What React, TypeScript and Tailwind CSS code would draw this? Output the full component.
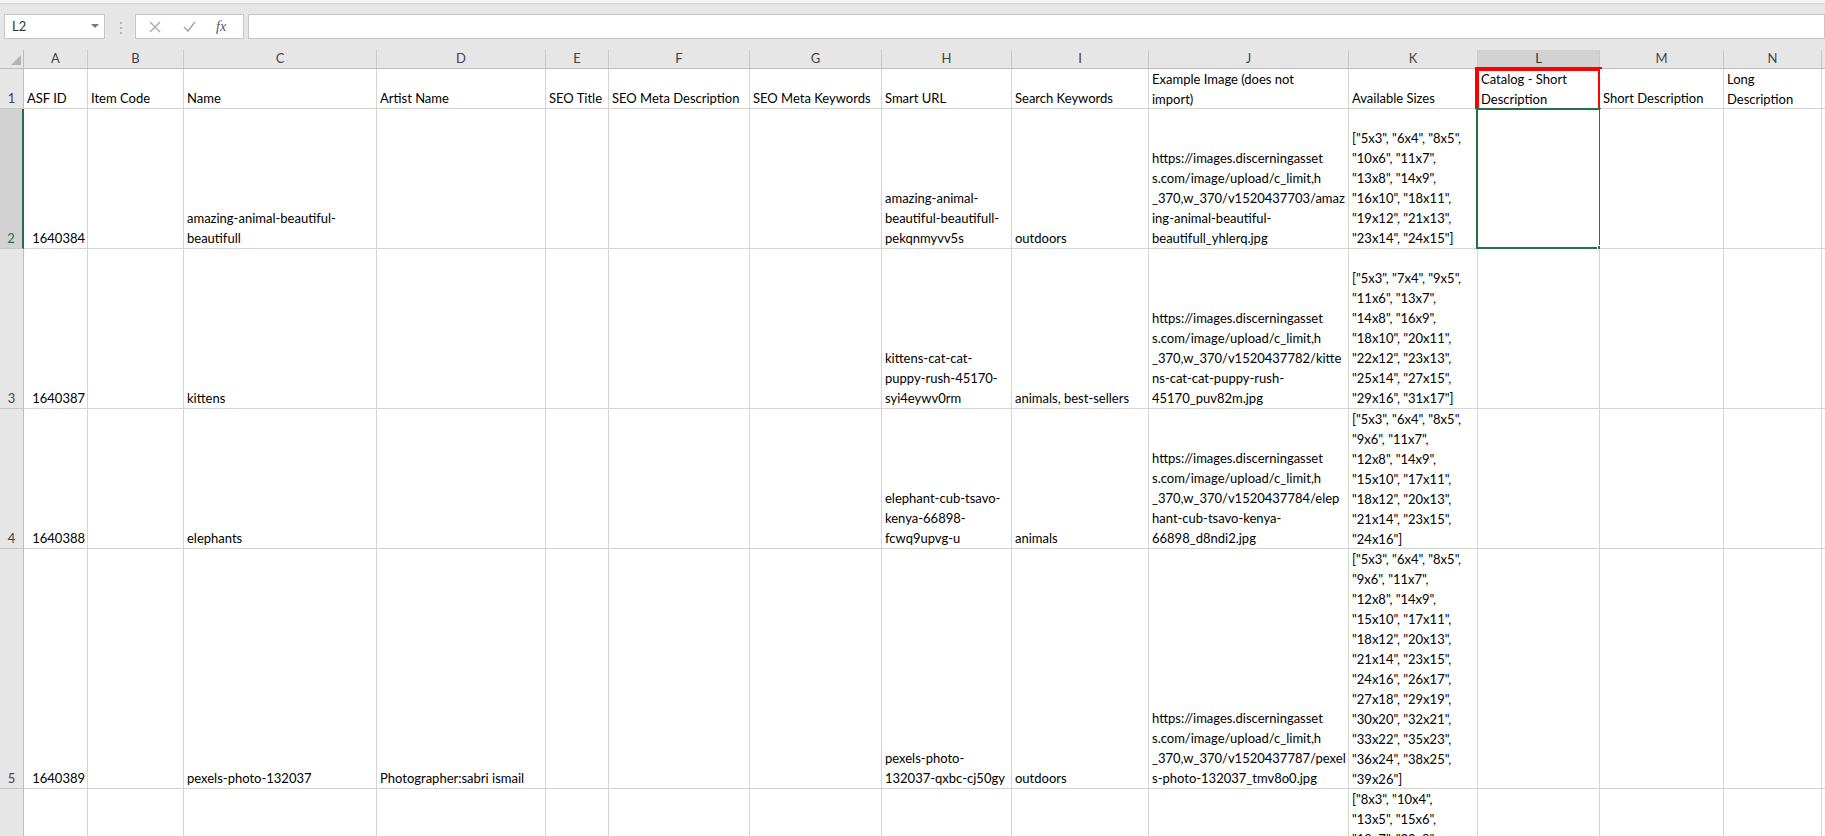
import React from "react";

const COLS = ["A", "B", "C", "D", "E", "F", "G", "H", "I", "J", "K", "L", "M", "N"];

type Row = {
  n: number;
  h: string;
  cells: Partial<Record<string, string[]>>;
};

const url = (id: string, tail: string[]) => [
  "https://images.discerningasset",
  "s.com/image/upload/c_limit,h",
  `_370,w_370/v${id}`,
  ...tail,
];

const header: Row = {
  n: 1,
  h: "h-[40px]",
  cells: {
    A: ["ASF ID"],
    B: ["Item Code"],
    C: ["Name"],
    D: ["Artist Name"],
    E: ["SEO Title"],
    F: ["SEO Meta Description"],
    G: ["SEO Meta Keywords"],
    H: ["Smart URL"],
    I: ["Search Keywords"],
    J: ["Example Image (does not", "import)"],
    K: ["Available Sizes"],
    L: ["Catalog - Short", "Description"],
    M: ["Short Description"],
    N: ["Long", "Description"],
  },
};

const rows: Row[] = [
  {
    n: 2,
    h: "h-[140px]",
    cells: {
      A: ["1640384"],
      C: ["amazing-animal-beautiful-", "beautifull"],
      H: ["amazing-animal-", "beautiful-beautifull-", "pekqnmyvv5s"],
      I: ["outdoors"],
      J: url("1520437703/amaz", ["ing-animal-beautiful-", "beautifull_yhlerq.jpg"]),
      K: [
        '["5x3", "6x4", "8x5",',
        '"10x6", "11x7",',
        '"13x8", "14x9",',
        '"16x10", "18x11",',
        '"19x12", "21x13",',
        '"23x14", "24x15"]',
      ],
    },
  },
  {
    n: 3,
    h: "h-[160px]",
    cells: {
      A: ["1640387"],
      C: ["kittens"],
      H: ["kittens-cat-cat-", "puppy-rush-45170-", "syi4eywv0rm"],
      I: ["animals, best-sellers"],
      J: url("1520437782/kitte", ["ns-cat-cat-puppy-rush-", "45170_puv82m.jpg"]),
      K: [
        '["5x3", "7x4", "9x5",',
        '"11x6", "13x7",',
        '"14x8", "16x9",',
        '"18x10", "20x11",',
        '"22x12", "23x13",',
        '"25x14", "27x15",',
        '"29x16", "31x17"]',
      ],
    },
  },
  {
    n: 4,
    h: "h-[140px]",
    cells: {
      A: ["1640388"],
      C: ["elephants"],
      H: ["elephant-cub-tsavo-", "kenya-66898-", "fcwq9upvg-u"],
      I: ["animals"],
      J: url("1520437784/elep", ["hant-cub-tsavo-kenya-", "66898_d8ndi2.jpg"]),
      K: [
        '["5x3", "6x4", "8x5",',
        '"9x6", "11x7",',
        '"12x8", "14x9",',
        '"15x10", "17x11",',
        '"18x12", "20x13",',
        '"21x14", "23x15",',
        '"24x16"]',
      ],
    },
  },
  {
    n: 5,
    h: "h-[240px]",
    cells: {
      A: ["1640389"],
      C: ["pexels-photo-132037"],
      D: ["Photographer:sabri ismail"],
      H: ["pexels-photo-", "132037-qxbc-cj50gy"],
      I: ["outdoors"],
      J: url("1520437787/pexel", ["s-photo-132037_tmv8o0.jpg"]),
      K: [
        '["5x3", "6x4", "8x5",',
        '"9x6", "11x7",',
        '"12x8", "14x9",',
        '"15x10", "17x11",',
        '"18x12", "20x13",',
        '"21x14", "23x15",',
        '"24x16", "26x17",',
        '"27x18", "29x19",',
        '"30x20", "32x21",',
        '"33x22", "35x23",',
        '"36x24", "38x25",',
        '"39x26"]',
      ],
    },
  },
  {
    // only the top of this row is in view
    n: 6,
    h: "h-[140px]",
    cells: {
      J: url("1520437790/pexel", ["s-photo-247502_b3kq1z.jpg"]),
      K: [
        '["8x3", "10x4",',
        '"13x5", "15x6",',
        '"18x7", "20x8",',
        '"23x9", "25x10",',
        '"28x11", "30x12",',
        '"33x13", "35x14",',
        '"38x15"]',
      ],
    },
  },
];

function Cell({ col, row }: { col: string; row: Row }) {
  const lines = row.cells[col] ?? [];
  const isNum = col === "A" && row.n > 1;
  const selected = col === "L" && row.n === 2;
  const marked = col === "L" && row.n === 1;
  return (
    <div
      className={`relative flex flex-col justify-end border-r border-b border-[#d4d4d4] bg-white leading-[20px] ${
        isNum ? "items-end pr-[2px]" : "items-start pl-[3px]"
      } ${row.h}`}
    >
      <div className="w-full overflow-hidden">
        {lines.map((l, i) => (
          <div key={i} className={`whitespace-pre ${isNum ? "text-right" : ""}`}>
            {l}
          </div>
        ))}
      </div>
      {selected && (
        <div className="absolute -left-[2px] -top-[1px] -right-[2px] -bottom-[1px] border-2 border-[#217346]">
          <div className="absolute -right-[5px] -bottom-[5px] h-[7px] w-[7px] border border-white bg-[#217346]" />
        </div>
      )}
      {marked && (
        <div className="absolute -left-[3px] -top-[2px] -right-[3px] -bottom-[7px] border-4 border-[#ff0000]" />
      )}
    </div>
  );
}

function RowHead({ row }: { row: Row }) {
  const sel = row.n === 2;
  return (
    <div
      className={`flex items-end justify-center border-b border-[#c8c8c8] leading-[20px] ${row.h} ${
        sel
          ? "border-r-2 border-r-[#217346] bg-[#d2d2d2] text-[#217346]"
          : "border-r border-r-[#bdbdbd] bg-[#e6e6e6] text-[#444]"
      }`}
    >
      {row.n < 6 ? row.n : ""}
    </div>
  );
}

export default function App() {
  return (
    <div className="h-[836px] w-[1825px] overflow-hidden bg-white font-['Lato',sans-serif] text-[13px] text-black">
      {/* ribbon edge */}
      <div className="h-[4px] border-b border-[#d5d5d5] bg-[#f3f3f3]" />

      {/* formula bar */}
      <div className="flex h-[46px] items-start bg-[#e6e6e6] pl-[4px] pt-[10px]">
        <div className="flex h-[25px] w-[101px] items-center justify-between border border-[#c6c6c6] bg-white pl-[7px] pr-[5px] text-[#333]">
          <span>L2</span>
          <svg width="8" height="5" viewBox="0 0 8 5">
            <path d="M0 0h8L4 4z" fill="#777" />
          </svg>
        </div>
        <div className="ml-[15px] mt-[8px] flex w-[3px] flex-col gap-[3px]">
          <div className="h-[2px] w-[2px] bg-[#b5b5b5]" />
          <div className="h-[2px] w-[2px] bg-[#b5b5b5]" />
          <div className="h-[2px] w-[2px] bg-[#b5b5b5]" />
        </div>
        <div className="ml-[12px] flex h-[25px] w-[109px] items-center border border-[#c6c6c6] bg-white">
          <svg className="ml-[13px]" width="12" height="12" viewBox="0 0 12 12">
            <path d="M1 1l10 10M11 1L1 11" stroke="#a6a6a6" strokeWidth="1.3" />
          </svg>
          <svg className="ml-[22px]" width="13" height="11" viewBox="0 0 13 11">
            <path d="M1 6l4 4 7-9" stroke="#a6a6a6" strokeWidth="1.5" fill="none" />
          </svg>
          <span className="ml-[20px] font-['Liberation_Serif',serif] text-[14px] italic text-[#555]">fx</span>
        </div>
        <div className="ml-[4px] h-[25px] flex-1 border border-[#c6c6c6] bg-white" />
      </div>

      {/* sheet */}
      <div className="grid grid-cols-[24px_64px_96px_193px_169px_63px_141px_132px_130px_137px_200px_129px_122px_124px_98px_1fr]">
        <div className="relative h-[19px] border-r border-b border-[#bdbdbd] bg-[#e6e6e6]">
          <svg className="absolute right-[2px] bottom-[3px]" width="10" height="10" viewBox="0 0 10 10">
            <path d="M10 0v10H0z" fill="#b4b4b4" />
          </svg>
        </div>
        {COLS.map((c) => (
          <div
            key={c}
            className={`flex h-[19px] items-center justify-center border-r border-r-[#c8c8c8] ${
              c === "L"
                ? "border-b-2 border-b-[#217346] bg-[#d2d2d2] text-[#333]"
                : "border-b border-b-[#bdbdbd] bg-[#e6e6e6] text-[#444]"
            }`}
          >
            {c}
          </div>
        ))}
        <div className="h-[19px] border-b border-[#bdbdbd] bg-[#e6e6e6]" />

        {[header, ...rows].map((row) => (
          <React.Fragment key={row.n}>
            <RowHead row={row} />
            {COLS.map((c) => (
              <Cell key={c} col={c} row={row} />
            ))}
            <div className={`border-b border-[#d4d4d4] bg-white ${row.h}`} />
          </React.Fragment>
        ))}
      </div>
    </div>
  );
}
